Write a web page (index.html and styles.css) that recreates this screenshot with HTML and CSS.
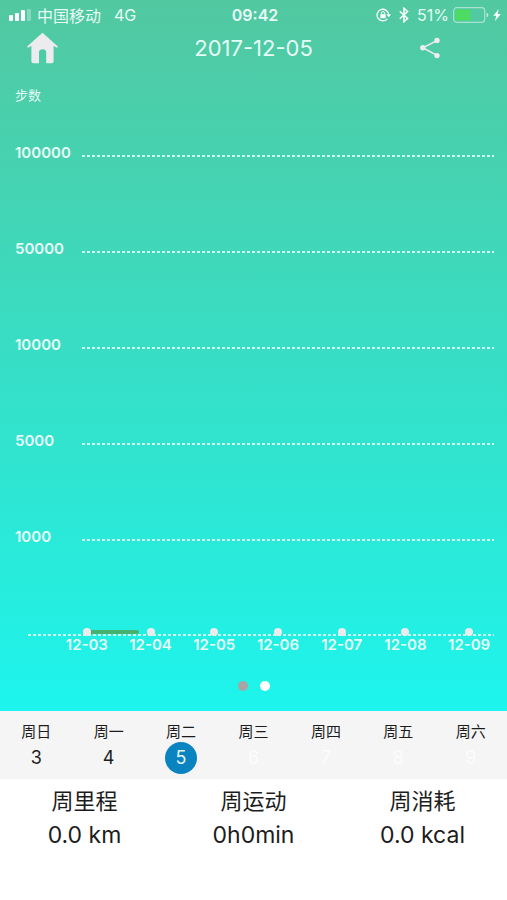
FILE: index.html
```html
<!DOCTYPE html>
<html lang="zh-CN">
  <head>
    <meta charset="UTF-8" />
    <meta name="viewport" content="width=device-width, initial-scale=1.0" />
    <title>步数</title>
    <link rel="stylesheet" href="styles.css">
  </head>
  <body>
    <div class="top">
      <div class="status">
        <div class="status-left">
          <svg class="signal" width="23" height="12" viewBox="0 0 23 12" fill="#fff">
            <rect x="0" y="6" width="4" height="6" rx="1" />
            <rect x="6" y="4" width="4" height="8" rx="1" />
            <rect x="12" y="1" width="4" height="11" rx="1" />
            <rect x="18" y="0" width="4" height="12" rx="1" opacity="0.3" />
          </svg>
          <span>中国移动</span>
          <span class="network">4G</span>
        </div>
        <span class="time">09:42</span>
        <div class="status-right">
          <svg width="15" height="14" viewBox="0 0 15 14" fill="none" stroke="#fff">
            <path d="M11.3 10.8A5.8 5.8 0 1 1 12.6 6.3" stroke-width="1.3" />
            <path d="M10.4 6.2H15L12.7 9.3Z" fill="#fff" stroke="none" />
            <rect x="4.4" y="6.2" width="5.2" height="4" fill="#fff" stroke="none" />
            <path d="M5.4 6.4V5.2a1.6 1.6 0 0 1 3.2 0V6.4" />
          </svg>
          <svg class="bluetooth" width="10" height="16" viewBox="0 0 10 16" fill="none" stroke="#fff" stroke-width="1.5">
            <path d="M.8 4.3L8.6 11.5L5 14.7V1.3L8.6 4.5L.8 11.7" />
          </svg>
          <span>51%</span>
          <svg class="battery" width="36" height="16" viewBox="0 0 36 16" fill="none">
            <rect x="0.7" y="0.7" width="31" height="14.6" rx="3" stroke="#fff" stroke-opacity="0.5" stroke-width="1.2" />
            <rect x="2.5" y="2.5" width="15" height="11" rx="1.5" fill="#4cdc62" />
            <path d="M33.5 5.5c2.4.8 2.4 4.2 0 5z" fill="#fff" fill-opacity="0.6" />
          </svg>
          <svg width="8" height="12" viewBox="0 0 8 12" fill="#fff">
            <path d="M5.8 0L.3 6.8H3.3L2 12L7.8 4.9H4.6Z" />
          </svg>
        </div>
      </div>

      <header class="header">
        <a class="home" href="#" aria-label="首页">
          <svg width="32" height="32" viewBox="0 0 32 32" fill="#ececee">
            <path d="M15.5.8L30.6 14.2Q31.4 15.6 29.6 15.4L26.6 14V29.5Q26.6 31.3 24.8 31.3H19.2V20.5Q19.2 17.3 15.6 17.3Q12 17.3 12 20.5V31.3H6.2Q4.4 31.3 4.4 29.5V14L1.4 15.4Q-.4 15.6.4 14.2Z" />
          </svg>
        </a>
        <h1 class="title">2017-12-05</h1>
        <button class="share" type="button" aria-label="分享">
          <svg width="20" height="22" viewBox="0 0 20 22" fill="#ececee">
            <path d="M17 3.6L2.8 10.8L17 18.4" fill="none" stroke="#ececee" stroke-width="1.6" />
            <circle cx="17" cy="3.4" r="2.7" />
            <circle cx="2.8" cy="10.8" r="2.7" />
            <circle cx="17" cy="18.6" r="2.7" />
          </svg>
        </button>
      </header>

      <div class="unit">步数</div>
      <div class="chart">
        <div class="row"><span>100000</span><i class="line"></i></div>
        <div class="row"><span>50000</span><i class="line"></i></div>
        <div class="row"><span>10000</span><i class="line"></i></div>
        <div class="row"><span>5000</span><i class="line"></i></div>
        <div class="row"><span>1000</span><i class="line"></i></div>
      </div>
      <div class="axis">
        <i class="line"></i>
        <ul class="points">
          <li><i class="bar"></i><i class="dot"></i>12-03</li>
          <li><i class="dot"></i>12-04</li>
          <li><i class="dot"></i>12-05</li>
          <li><i class="dot"></i>12-06</li>
          <li><i class="dot"></i>12-07</li>
          <li><i class="dot"></i>12-08</li>
          <li><i class="dot"></i>12-09</li>
        </ul>
      </div>
      <div class="pager">
        <i class="page"></i>
        <i class="page active"></i>
      </div>
    </div>

    <div class="week">
      <button class="day" type="button">周日<span class="date">3</span></button>
      <button class="day" type="button">周一<span class="date">4</span></button>
      <button class="day" type="button">周二<span class="date selected">5</span></button>
      <button class="day" type="button" disabled>周三<span class="date">6</span></button>
      <button class="day" type="button" disabled>周四<span class="date">7</span></button>
      <button class="day" type="button" disabled>周五<span class="date">8</span></button>
      <button class="day" type="button" disabled>周六<span class="date">9</span></button>
    </div>

    <dl class="total">
      <div>
        <dt>周里程</dt>
        <dd>0.0 km</dd>
      </div>
      <div>
        <dt>周运动</dt>
        <dd>0h0min</dd>
      </div>
      <div>
        <dt>周消耗</dt>
        <dd>0.0 kcal</dd>
      </div>
    </dl>
  </body>
</html>
```

FILE: styles.css
```css
* {
  box-sizing: border-box;
}

body {
  margin: 0;
  background-color: #fff;
  color: #1c1c1c;
  font-family: Inter, "Noto Sans CJK SC", sans-serif;
}

svg {
  display: block;
}

button {
  padding: 0;
  border: 0;
  background: none;
  color: inherit;
  font-family: inherit;
}

.top {
  height: 711px;
  color: #e6fbf6;
  background: linear-gradient(#52c8a0, #45d3b2 25%, #37dec5 50%, #28ebdb 80%, #1df5ee);
}

.status {
  display: grid;
  grid-template-columns: 1fr auto 1fr;
  align-items: center;
  height: 30px;
  padding: 0 6px 0 9px;
  font-size: 16px;
}

.status-left,
.status-right {
  display: flex;
  align-items: center;
  white-space: nowrap;
}

.status-left {
  gap: 5px;
}

.status-right {
  justify-content: flex-end;
  gap: 4px;
}

.network {
  margin-left: 8px;
}

.bluetooth {
  margin: 0 4px;
}

.time {
  font-weight: 600;
}

.header {
  display: grid;
  grid-template-columns: 60px 1fr 60px;
  align-items: center;
  height: 36px;
  padding: 0 27px;
}

.title {
  margin: 0;
  text-align: center;
  font-size: 22px;
  font-weight: 400;
}

.share {
  justify-self: start;
}

.unit {
  height: 38px;
  padding: 19px 15px 0;
  font-size: 13px;
  line-height: 20px;
}

.row {
  display: grid;
  grid-template-columns: 67px 1fr;
  align-items: center;
  height: 96px;
  padding: 0 13px 0 15px;
  font-size: 15px;
  font-weight: 600;
}

.line {
  height: 2px;
  background: repeating-linear-gradient(90deg, #c9f8ee 0 3px, transparent 3px 5px);
}

.row .line {
  margin-top: 8px;
}

.axis {
  display: grid;
  margin-top: 44px;
}

.axis .line {
  grid-area: 1 / 1;
  margin: 6px 13px 0 28px;
}

.points {
  grid-area: 1 / 1;
  display: grid;
  grid-template-columns: repeat(7, 1fr);
  margin: 0 6px 0 55px;
  padding: 0;
  list-style: none;
  text-align: center;
  font-size: 15px;
  font-weight: 600;
  line-height: 18px;
}

.points li {
  position: relative;
}

.dot {
  position: relative;
  display: block;
  width: 8px;
  height: 8px;
  margin: 0 auto;
  border-radius: 50%;
  background-color: #ececee;
}

/* steps of the day, drawn from its point */
.bar {
  position: absolute;
  top: 2px;
  left: 50%;
  width: 52px;
  height: 4px;
  border-radius: 2px;
  background-color: #45b36f;
}

.pager {
  display: flex;
  justify-content: center;
  gap: 12px;
  margin-top: 27px;
}

.page {
  width: 10px;
  height: 10px;
  border-radius: 50%;
  background-color: #a9a5a2;
}

.page.active {
  background-color: #fff;
}

.week {
  display: grid;
  grid-template-columns: repeat(7, 1fr);
  height: 68px;
  padding-top: 10px;
  background-color: #f5f5f5;
}

.day {
  display: flex;
  flex-direction: column;
  align-items: center;
  font-size: 15px;
  line-height: 21px;
}

.date {
  width: 32px;
  height: 32px;
  border-radius: 50%;
  font-size: 18px;
  line-height: 32px;
}

.date.selected {
  background-color: #0a84c1;
  color: #e6f3fa;
}

.day:disabled .date {
  color: #fcfcfc;
}

.total {
  display: grid;
  grid-template-columns: repeat(3, 1fr);
  margin: 0;
  padding-top: 5px;
  text-align: center;
  font-size: 22px;
  line-height: 34px;
}

.total dd {
  margin: 0;
  font-size: 23px;
}
```
